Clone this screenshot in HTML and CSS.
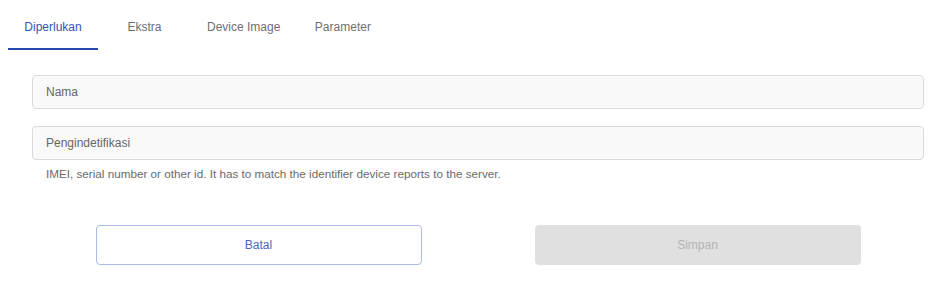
FILE: index.html
```html
<!DOCTYPE html>
<html lang="id">
<head>
<meta charset="utf-8">
<title>Device</title>
<link rel="stylesheet" href="styles.css">
</head>
<body>
<div class="tabs">
  <div class="tab active">Diperlukan</div>
  <div class="tab">Ekstra</div>
  <div class="tab">Device Image</div>
  <div class="tab">Parameter</div>
</div>
<div class="form">
  <div class="field"><input class="input" placeholder="Nama"></div>
  <div class="field">
    <input class="input" placeholder="Pengindetifikasi">
    <div class="helper">IMEI, serial number or other id. It has to match the identifier device reports to the server.</div>
  </div>
  <div class="actions">
    <button class="btn btn-outline">Batal</button>
    <button class="btn btn-disabled" disabled>Simpan</button>
  </div>
</div>
</body>
</html>
```
FILE: styles.css
```css
* { box-sizing: border-box; }
body {
  margin: 8px;
  font-family: "Liberation Sans", Arial, sans-serif;
  background: #fff;
  color: #333;
}
.tabs {
  display: flex;
  gap: 1.5px;
  height: 42px;
}
.tab {
  min-width: 90px;
  padding: 11px 16px 0;
  text-align: center;
  font-size: 12px;
  color: #6f6f6f;
  height: 42px;
  line-height: 16px;
}
.tab.active {
  color: #3453b4;
  border-bottom: 2px solid #2747ad;
}
.form {
  margin: 25px 8px 0 24px;
}
.field {
  margin-bottom: 17px;
}
.input {
  display: block;
  width: 100%;
  height: 34px;
  border: 1px solid #dadada;
  border-radius: 4px;
  background: #f9f9f9;
  padding: 0 13px;
  font-family: inherit;
  font-size: 12px;
  color: #333;
  outline: none;
}
.input::placeholder { color: #666; }
.helper {
  font-size: 11.7px;
  color: #6a6a6a;
  padding: 7px 0 0 14px;
  line-height: 14px;
  margin-bottom: 44px;
}
.actions {
  display: flex;
  justify-content: center;
  gap: 113px;
}
.btn {
  width: 326px;
  height: 40px;
  border-radius: 4px;
  font-family: inherit;
  font-size: 12px;
}
.btn-outline {
  background: #fff;
  border: 1px solid #a9bbe6;
  color: #4a69bd;
}
.btn-disabled {
  background: #e0e0e0;
  border: none;
  color: #b3b3b3;
}
```
